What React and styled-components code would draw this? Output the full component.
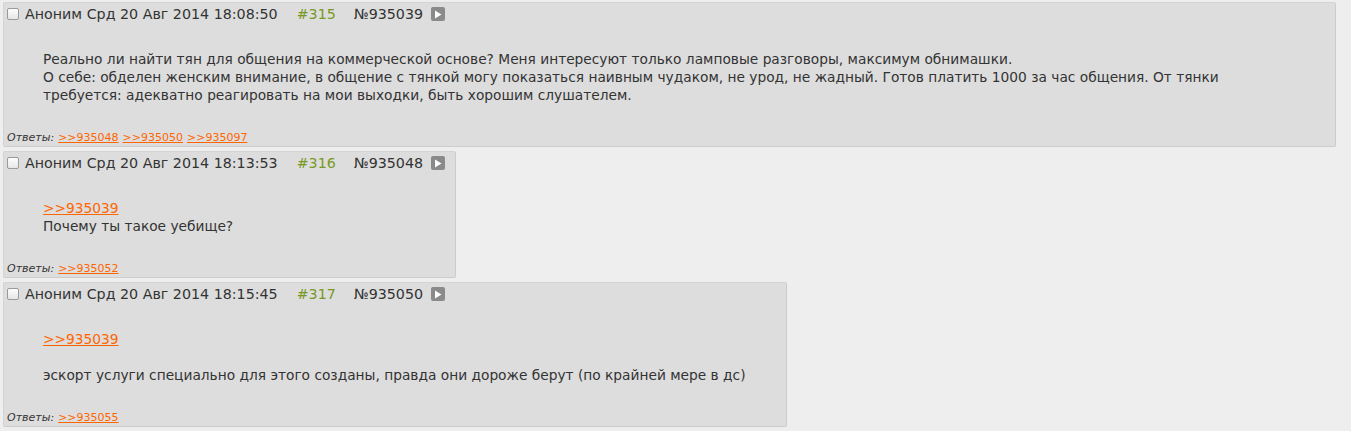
import React from "react";
import styled, { createGlobalStyle } from "styled-components";

const Global = createGlobalStyle`
  html, body { margin: 0; padding: 0; background: #eeeeee; }
  body { font-family: "DejaVu Sans", Verdana, sans-serif; color: #333333; }
`;

const Thread = styled.div`
  display: flex;
  flex-direction: column;
  align-items: flex-start;
  gap: 4px;
  padding: 2px 15px 0 3px;
`;

const Post = styled.div`
  background: #dddddd;
  border: 1px solid #cccccc;
  border-left-color: #d4d4d4;
  border-top-color: #d4d4d4;
  border-radius: 2px;
  max-width: 100%;
  box-sizing: border-box;
`;

const Header = styled.div`
  display: flex;
  align-items: center;
  height: 22px;
  padding: 0 10px 0 3px;
  font-size: 14.25px;
  white-space: nowrap;
`;

const Check = styled.span`
  display: inline-block;
  width: 10px;
  height: 10px;
  border: 1px solid #9a9a9a;
  border-radius: 2px;
  background: linear-gradient(#fdfdfd, #e6e6e6);
  margin-right: 6px;
`;

const Name = styled.span`
  color: #333333;
`;

const Count = styled.span`
  color: #789922;
  margin-left: 19px;
`;

const Num = styled.span`
  color: #333333;
  margin-left: 18px;
`;

const Expand = styled.span`
  display: inline-flex;
  align-items: center;
  justify-content: center;
  width: 14px;
  height: 14px;
  margin-left: 8px;
  background: #8a8a8a;
  border-radius: 2px;
`;

const Body = styled.div`
  margin: 25px 40px 27px 39px;
  font-size: 13.75px;
  line-height: 18px;
`;

const Line = styled.div`
  min-height: 18px;
`;

const Link = styled.a`
  color: #ff6600;
  text-decoration: underline;
  cursor: pointer;
`;

const Replies = styled.div`
  padding: 0 4px 1px 3px;
  font-size: 11px;
  line-height: 14px;
`;

const RepLabel = styled.em`
  font-style: italic;
  color: #333333;
`;

const RepLink = styled(Link)`
  margin-left: 4px;
`;

function PostView({ time, count, num, lines, replies }) {
  return (
    <Post>
      <Header>
        <Check />
        <Name>Аноним Срд 20 Авг 2014 {time}</Name>
        <Count>#{count}</Count>
        <Num>№{num}</Num>
        <Expand>
          <svg width="8" height="9" viewBox="0 0 8 9">
            <path d="M1 0.5 L7.5 4.5 L1 8.5 Z" fill="#ffffff" />
          </svg>
        </Expand>
      </Header>
      <Body>
        {lines.map((l, i) =>
          typeof l === "object" ? (
            <Line key={i}>
              <Link>{">>" + l.ref}</Link>
            </Line>
          ) : (
            <Line key={i}>{l}</Line>
          )
        )}
      </Body>
      <Replies>
        <RepLabel>Ответы:</RepLabel>
        {replies.map((r) => (
          <RepLink key={r}>{">>" + r}</RepLink>
        ))}
      </Replies>
    </Post>
  );
}

const posts = [
  {
    time: "18:08:50",
    count: 315,
    num: 935039,
    lines: [
      "Реально ли найти тян для общения на коммерческой основе? Меня интересуют только ламповые разговоры, максимум обнимашки.",
      "О себе: обделен женским внимание, в общение с тянкой могу показаться наивным чудаком, не урод, не жадный. Готов платить 1000 за час общения. От тянки требуется: адекватно реагировать на мои выходки, быть хорошим слушателем.",
    ],
    replies: [935048, 935050, 935097],
  },
  {
    time: "18:13:53",
    count: 316,
    num: 935048,
    lines: [{ ref: 935039 }, "Почему ты такое уебище?"],
    replies: [935052],
  },
  {
    time: "18:15:45",
    count: 317,
    num: 935050,
    lines: [{ ref: 935039 }, "", "эскорт услуги специально для этого созданы, правда они дороже берут (по крайней мере в дс)"],
    replies: [935055],
  },
];

export default function App() {
  return (
    <>
      <Global />
      <Thread>
        {posts.map((p) => (
          <PostView key={p.num} {...p} />
        ))}
      </Thread>
    </>
  );
}
